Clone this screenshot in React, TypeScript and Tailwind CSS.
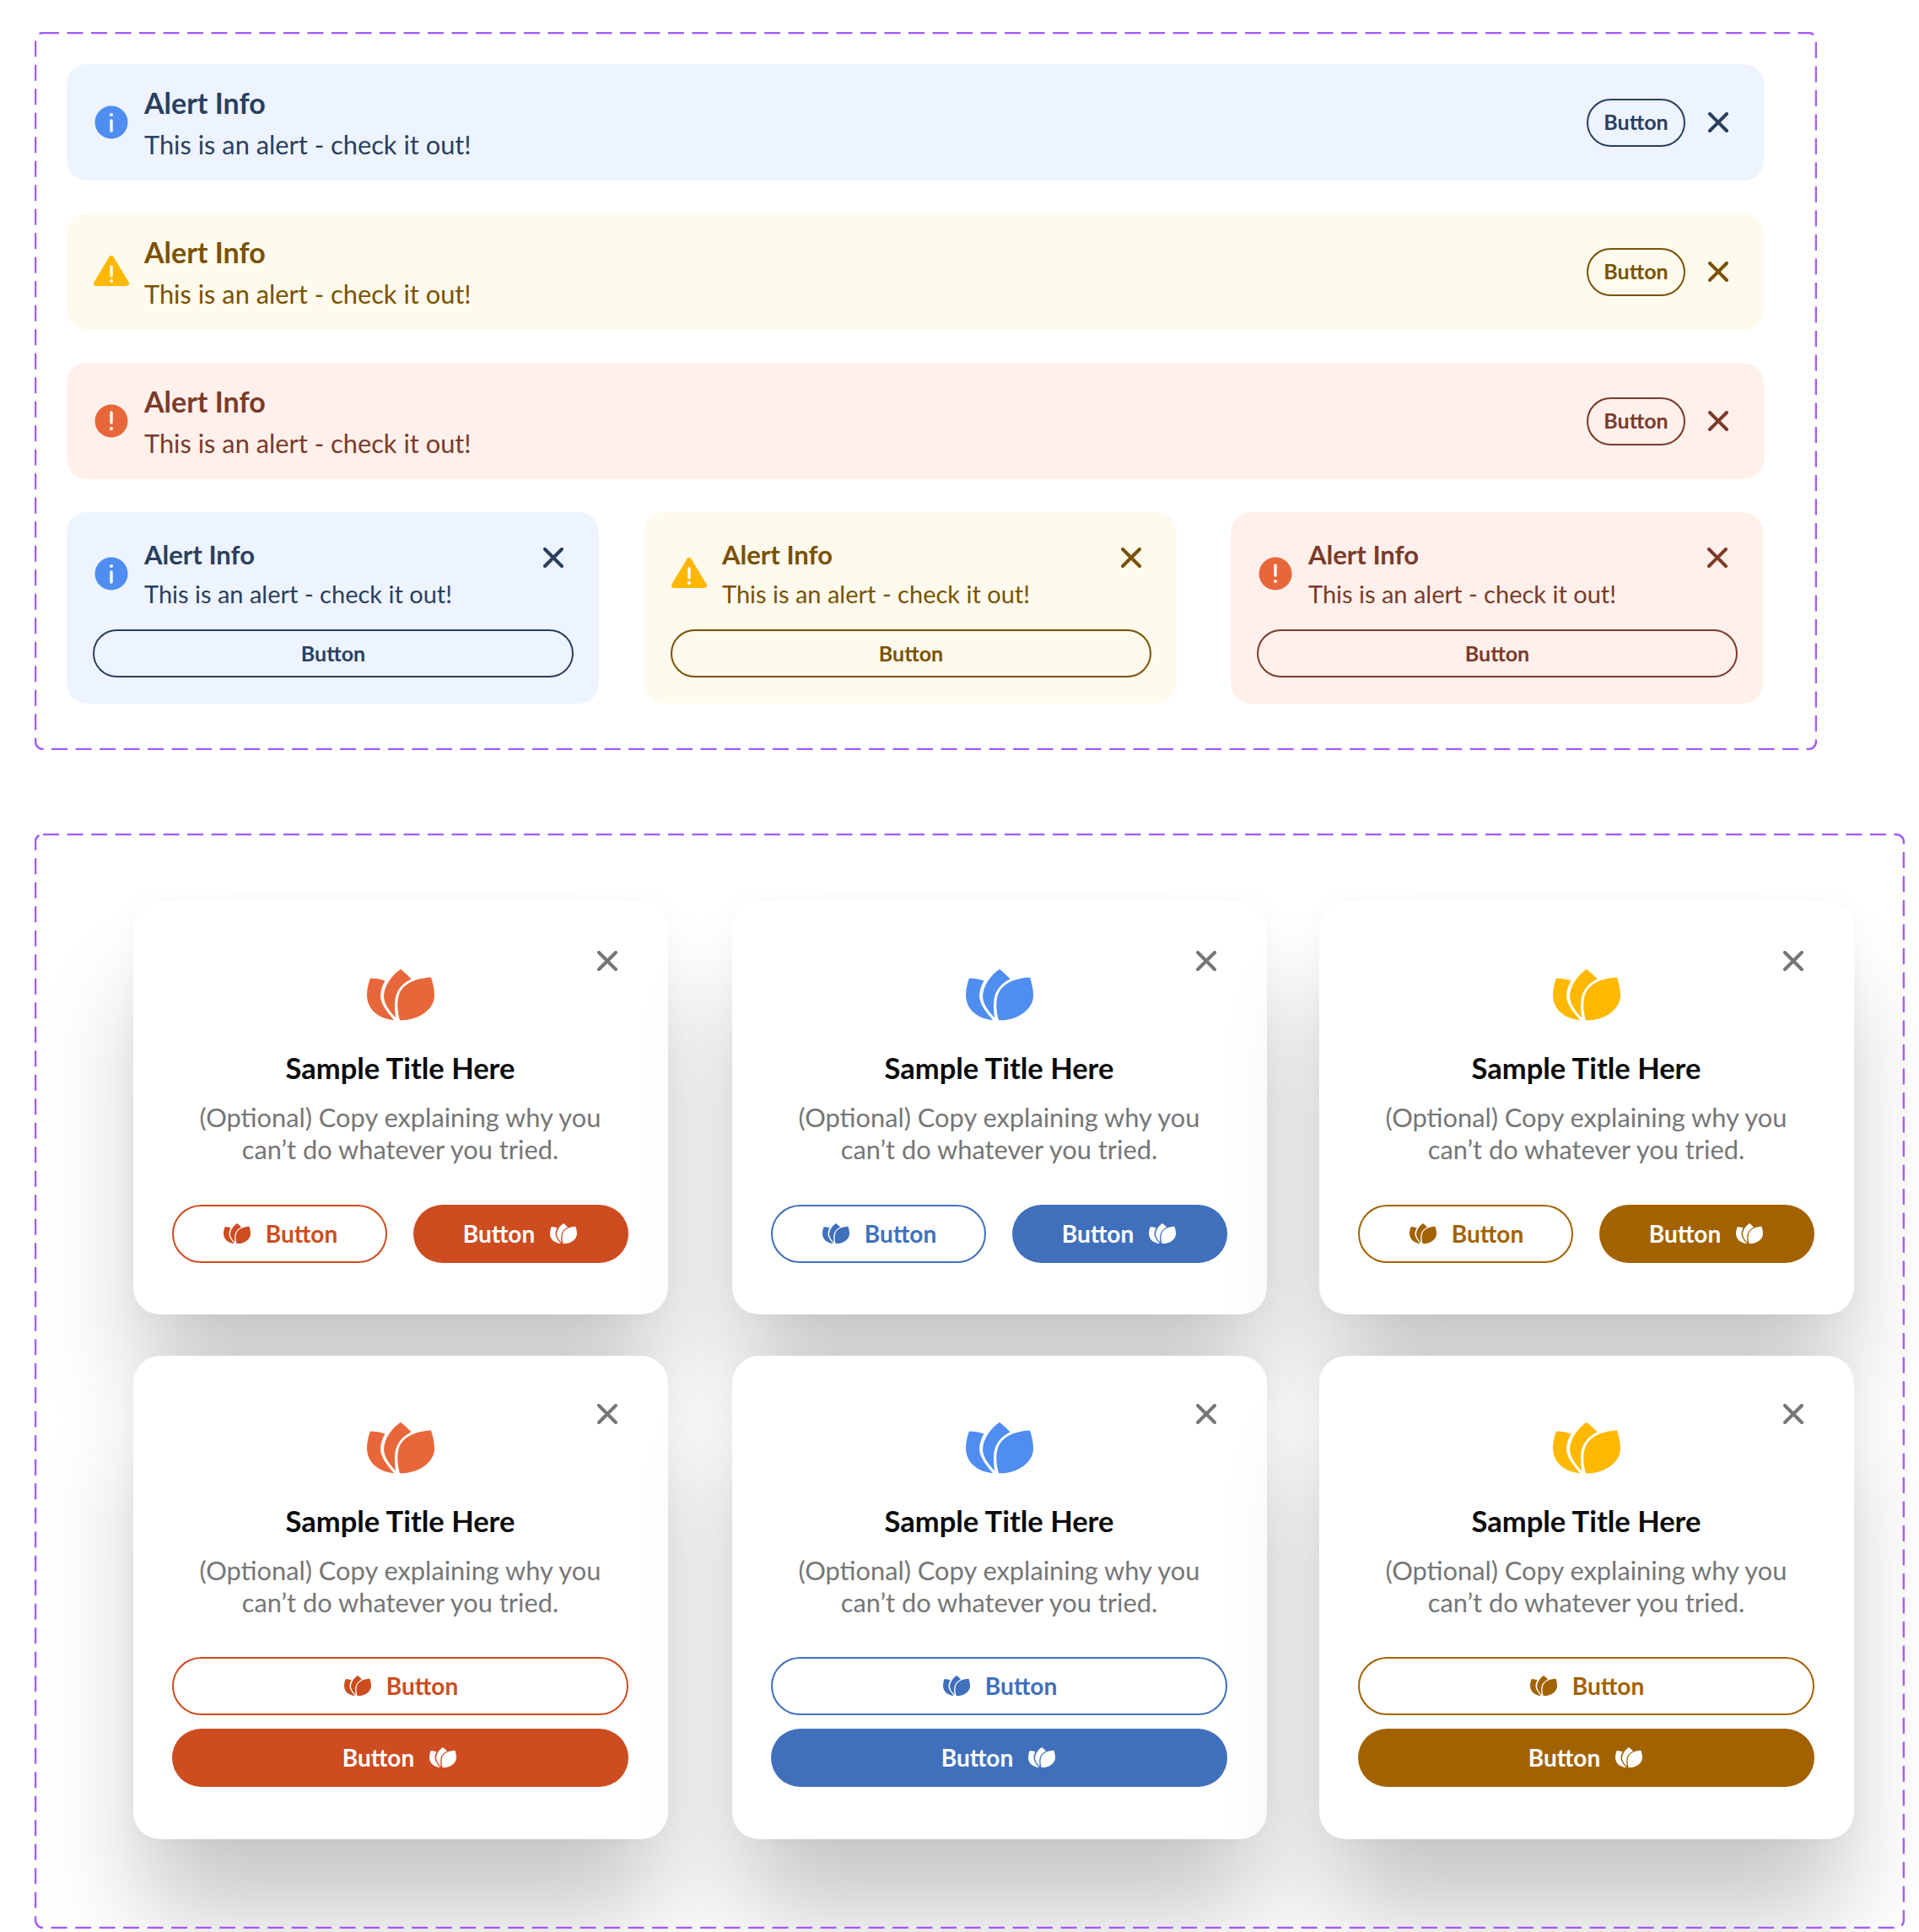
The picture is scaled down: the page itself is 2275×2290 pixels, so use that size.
import type { ReactNode } from "react";

type AlertTone = {
  bg: string;
  text: string;
  border: string;
  icon: "info" | "warning" | "error";
};

const blueAlert: AlertTone = { bg: "bg-[#edf4ff]", text: "text-[#2a3f5f]", border: "border-[#2a3f5f]", icon: "info" };
const amberAlert: AlertTone = { bg: "bg-[#fffaee]", text: "text-[#7a5200]", border: "border-[#7a5200]", icon: "warning" };
const redAlert: AlertTone = { bg: "bg-[#fff0ec]", text: "text-[#7c3a28]", border: "border-[#7c3a28]", icon: "error" };

type ModalTone = {
  icon: string;
  small: string;
  outline: string;
  fill: string;
};

const redModal: ModalTone = { icon: "text-[#e8673a]", small: "text-[#cd4c20]", outline: "border-[#cd4c20] text-[#cd4c20]", fill: "bg-[#cd4c20]" };
const blueModal: ModalTone = { icon: "text-[#4f8ef0]", small: "text-[#4070bc]", outline: "border-[#4070bc] text-[#4070bc]", fill: "bg-[#4070bc]" };
const amberModal: ModalTone = { icon: "text-[#ffb800]", small: "text-[#a36200]", outline: "border-[#a36200] text-[#a36200]", fill: "bg-[#a36200]" };

function DashedFrame({ className, children }: { className: string; children: ReactNode }) {
  return (
    <div className={`relative ${className}`}>
      <svg className="absolute inset-0 h-full w-full pointer-events-none z-10" fill="none">
        <rect x="1" y="1" width="calc(100% - 2px)" height="calc(100% - 2px)" rx="9" stroke="#a259ff" strokeWidth="2.5" strokeDasharray="19 9.5" />
      </svg>
      {children}
    </div>
  );
}

function Tulip({ className }: { className: string }) {
  return (
    <svg viewBox="0 0 82 64" fill="currentColor" className={className}>
      <path d="M4 12C10 12 17 13 22 15C17 24 15 33 18 41C21 49 27 56 33 63C14 61 0 50 0 32C0 25 2 18 4 12Z" />
      <path d="M41 1C46 5 50 9 54 13C45 17 38 24 35 34C33 43 34 52 35 60C28 53 23 46 21 38C19 25 28 10 41 1Z" />
      <path d="M78 11C80 18 82 25 82 33C82 50 62 64 40 63C37 53 36 42 39 32C44 18 60 12 78 11Z" />
    </svg>
  );
}

function CloseIcon({ className }: { className: string }) {
  return (
    <svg viewBox="0 0 24 24" fill="none" stroke="currentColor" strokeWidth="4" strokeLinecap="round" className={className}>
      <path d="M2 2L22 22M22 2L2 22" />
    </svg>
  );
}

function AlertIcon({ type }: { type: AlertTone["icon"] }) {
  if (type === "warning") {
    return (
      <svg viewBox="0 0 42 38" className="w-[42px] h-[38px] shrink-0">
        <path d="M21 3L39 33H3Z" fill="#ffb800" stroke="#ffb800" strokeWidth="6" strokeLinejoin="round" />
        <path d="M21 13V24" stroke="#fff" strokeWidth="3.4" strokeLinecap="round" />
        <circle cx="21" cy="30" r="2" fill="#fff" />
      </svg>
    );
  }
  if (type === "error") {
    return (
      <svg viewBox="0 0 42 40" className="w-[42px] h-[40px] shrink-0">
        <circle cx="21" cy="20" r="19.5" fill="#e8673a" />
        <path d="M21 10V22" stroke="#fff" strokeWidth="3.4" strokeLinecap="round" />
        <circle cx="21" cy="29" r="2" fill="#fff" />
      </svg>
    );
  }
  return (
    <svg viewBox="0 0 42 40" className="w-[42px] h-[40px] shrink-0">
      <circle cx="21" cy="20" r="19.5" fill="#4f8ef0" />
      <circle cx="21" cy="11" r="2" fill="#fff" />
      <path d="M21 18V30" stroke="#fff" strokeWidth="3.4" strokeLinecap="round" />
    </svg>
  );
}

function WideAlert({ tone }: { tone: AlertTone }) {
  return (
    <div className={`flex items-center w-[2012px] h-[138px] rounded-[24px] pl-[32px] pr-[42px] ${tone.bg} ${tone.text}`}>
      <AlertIcon type={tone.icon} />
      <div className="ml-[18px] flex-1 pt-[3px]">
        <p className="text-[34px] leading-[46px] font-bold">Alert Info</p>
        <p className="text-[30.8px] leading-[46px] mt-[4px]">This is an alert - check it out!</p>
      </div>
      <button className={`w-[117px] h-[57px] rounded-full border-2 text-[25px] font-bold ${tone.border}`}>Button</button>
      <CloseIcon className="w-[24px] h-[24px] ml-[27px]" />
    </div>
  );
}

function CompactAlert({ tone, className = "" }: { tone: AlertTone; className?: string }) {
  return (
    <div className={`w-[631px] h-[227px] rounded-[24px] pl-[32px] pr-[31px] pt-[30px] ${tone.bg} ${tone.text} ${className}`}>
      <div className="flex items-center h-[86px]">
        <AlertIcon type={tone.icon} />
        <div className="ml-[18px] flex-1">
          <p className="text-[31px] leading-[40px] font-bold">Alert Info</p>
          <p className="text-[29px] leading-[40px] mt-[7px]">This is an alert - check it out!</p>
        </div>
        <CloseIcon className="w-[24px] h-[24px] mr-[11px] -mt-[38px]" />
      </div>
      <button className={`block -ml-[1px] mt-[23px] w-[570px] h-[57px] rounded-full border-2 text-[25px] font-bold ${tone.border}`}>Button</button>
    </div>
  );
}

function OutlineButton({ tone, className }: { tone: ModalTone; className: string }) {
  return (
    <button className={`flex items-center justify-center gap-[18px] h-[69px] pb-[2px] pl-[2px] rounded-full border-2 text-[28px] font-bold ${tone.outline} ${className}`}>
      <Tulip className="w-[32px] h-[26px]" />
      Button
    </button>
  );
}

function FillButton({ tone, className }: { tone: ModalTone; className: string }) {
  return (
    <button className={`flex items-center justify-center gap-[18px] h-[69px] pb-[2px] pr-[2px] rounded-full text-[28px] font-bold text-white ${tone.fill} ${className}`}>
      Button
      <Tulip className="w-[32px] h-[26px]" />
    </button>
  );
}

function ModalCard({ tone, stacked, className = "" }: { tone: ModalTone; stacked?: boolean; className?: string }) {
  return (
    <div className={`relative w-[634px] ${stacked ? "h-[573px] pt-[77px]" : "h-[490px] pt-[79px]"} rounded-[32px] bg-white pl-[46px] pr-[47px] shadow-[0_100px_120px_-10px_rgba(0,0,0,0.22),0_0_30px_rgba(0,0,0,0.03)] ${className}`}>
      <CloseIcon className={`absolute ${stacked ? "top-[57px]" : "top-[59px]"} right-[60px] w-[24px] h-[24px] text-[#767676]`} />
      <Tulip className={`mx-auto w-[80px] h-[64px] ${tone.icon}`} />
      <h2 className="mt-[33px] text-center text-[34.5px] leading-[44px] font-bold text-[#0b0b0b]">Sample Title Here</h2>
      <p className="mt-[18px] text-center text-[30.8px] leading-[38px] text-[#767676]">
        (Optional) Copy explaining why you
        <br />
        can’t do whatever you tried.
      </p>
      {stacked ? (
        <div className="mt-[45px] flex flex-col gap-[16px]">
          <OutlineButton tone={tone} className="w-full" />
          <FillButton tone={tone} className="w-full" />
        </div>
      ) : (
        <div className="mt-[46px] flex gap-[31px]">
          <OutlineButton tone={tone} className="w-[255px]" />
          <FillButton tone={tone} className="w-[255px]" />
        </div>
      )}
    </div>
  );
}

export default function App() {
  return (
    <div className="w-[2275px] h-[2290px] overflow-hidden bg-white pl-[41px] pt-[38px] font-['Lato',sans-serif]">
      <DashedFrame className="w-[2113px] h-[851px] pl-[38px] pt-[38px]">
        <div className="flex flex-col gap-[39px]">
          <WideAlert tone={blueAlert} />
          <WideAlert tone={amberAlert} />
          <WideAlert tone={redAlert} />
          <div className="flex">
            <CompactAlert tone={blueAlert} />
            <CompactAlert tone={amberAlert} className="ml-[54px]" />
            <CompactAlert tone={redAlert} className="ml-[64px]" />
          </div>
        </div>
      </DashedFrame>

      <DashedFrame className="mt-[99px] w-[2217px] h-[1298px] pl-[117px] pt-[80px]">
        <div className="flex">
          <ModalCard tone={redModal} />
          <ModalCard tone={blueModal} className="ml-[76px]" />
          <ModalCard tone={amberModal} className="ml-[62px]" />
        </div>
        <div className="flex mt-[49px]">
          <ModalCard tone={redModal} stacked />
          <ModalCard tone={blueModal} stacked className="ml-[76px]" />
          <ModalCard tone={amberModal} stacked className="ml-[62px]" />
        </div>
      </DashedFrame>
    </div>
  );
}
